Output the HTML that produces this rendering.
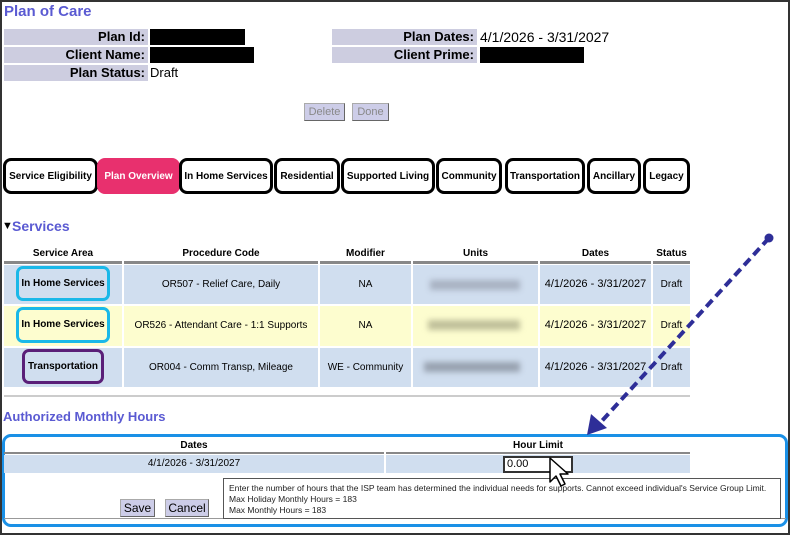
<!DOCTYPE html>
<html><head><style>
*{margin:0;padding:0;box-sizing:border-box}
body{width:790px;height:535px;position:relative;background:#fff;font-family:"Liberation Sans",Arial,sans-serif;overflow:hidden}
.a{position:absolute}
.frame{left:0;top:0;width:790px;height:535px;border:2px solid #333;border-right-width:2px}
.h{color:#5a5ad2;font-weight:bold}
.lab{background:#cdcde0;font-weight:bold;font-size:13px;text-align:right;padding-right:3px;line-height:16px;height:16px}
.blk{background:#000;height:16px}
.val{font-size:13px;line-height:16px}
.btn{background:#cdcde8;border:1px solid #aaa;border-right-color:#666;border-bottom-color:#666;font-size:11px;color:#888;text-align:center;line-height:16px}
.tab{border:3px solid #000;border-radius:8px;height:36px;top:158px;font-size:10px;font-weight:bold;text-align:center;line-height:32px;background:#fff}
.th{font-size:10px;font-weight:bold;text-align:center;top:248px;line-height:12px}
.td{font-size:10px;text-align:center}
.sa{border:3px solid #1ab8e8;border-radius:7px;font-size:10px;font-weight:bold;text-align:center}
</style></head><body>
<div class="a frame"></div>
<div class="a h" style="left:4px;top:3px;font-size:15px">Plan of Care</div>

<div class="a lab" style="left:4px;top:29px;width:144px">Plan Id:</div>
<div class="a blk" style="left:150px;top:29px;width:95px"></div>
<div class="a lab" style="left:4px;top:47px;width:144px">Client Name:</div>
<div class="a blk" style="left:150px;top:47px;width:104px"></div>
<div class="a lab" style="left:4px;top:65px;width:144px">Plan Status:</div>
<div class="a val" style="left:150px;top:65px">Draft</div>

<div class="a lab" style="left:332px;top:29px;width:145px">Plan Dates:</div>
<div class="a val" style="left:480px;top:29px;font-size:14px">4/1/2026 - 3/31/2027</div>
<div class="a lab" style="left:332px;top:47px;width:145px">Client Prime:</div>
<div class="a blk" style="left:480px;top:47px;width:104px"></div>

<div class="a btn" style="left:304px;top:103px;width:41px;height:18px">Delete</div>
<div class="a btn" style="left:352px;top:103px;width:37px;height:18px">Done</div>

<div class="a tab" style="left:3px;width:95px">Service Eligibility</div>
<div class="a tab" style="left:97px;width:83px;background:#e8306e;border-color:#e8306e;color:#fff">Plan Overview</div>
<div class="a tab" style="left:179px;width:94px">In Home Services</div>
<div class="a tab" style="left:274px;width:66px">Residential</div>
<div class="a tab" style="left:341px;width:94px">Supported Living</div>
<div class="a tab" style="left:436px;width:66px">Community</div>
<div class="a tab" style="left:505px;width:80px">Transportation</div>
<div class="a tab" style="left:587px;width:54px">Ancillary</div>
<div class="a tab" style="left:643px;width:47px">Legacy</div>

<div class="a" style="left:2px;top:220px;font-size:11px">&#9660;</div>
<div class="a h" style="left:12px;top:218px;font-size:14px">Services</div>

<div class="a th" style="left:4px;width:118px">Service Area</div>
<div class="a th" style="left:124px;width:194px">Procedure Code</div>
<div class="a th" style="left:320px;width:91px">Modifier</div>
<div class="a th" style="left:413px;width:125px">Units</div>
<div class="a th" style="left:540px;width:111px">Dates</div>
<div class="a th" style="left:653px;width:37px">Status</div>
<div class="a" style="left:4px;top:261px;width:686px;height:3px;background:linear-gradient(90deg,#888 0 118px,#fff 118px 120px,#888 120px 314px,#fff 314px 316px,#888 316px 407px,#fff 407px 409px,#888 409px 534px,#fff 534px 536px,#888 536px 647px,#fff 647px 649px,#888 649px)"></div>

<div class="a" style="left:4px;top:265px;width:686px;height:39px;background:#d0deef"></div>
<div class="a" style="left:4px;top:306px;width:686px;height:40px;background:#fdfdcf"></div>
<div class="a" style="left:4px;top:348px;width:686px;height:39px;background:#d0deef"></div>
<div class="a" style="left:122px;top:265px;width:2px;height:122px;background:#fff"></div>
<div class="a" style="left:318px;top:265px;width:2px;height:122px;background:#fff"></div>
<div class="a" style="left:411px;top:265px;width:2px;height:122px;background:#fff"></div>
<div class="a" style="left:538px;top:265px;width:2px;height:122px;background:#fff"></div>
<div class="a" style="left:651px;top:265px;width:2px;height:122px;background:#fff"></div>

<div class="a sa" style="left:16px;top:266px;width:94px;height:35px;line-height:29px">In Home Services</div>
<div class="a sa" style="left:16px;top:307px;width:94px;height:36px;line-height:30px">In Home Services</div>
<div class="a sa" style="left:22px;top:349px;width:82px;height:35px;line-height:29px;border-color:#5a1f78">Transportation</div>

<div class="a td" style="left:124px;top:279px;width:194px">OR507 - Relief Care, Daily</div>
<div class="a td" style="left:124px;top:320px;width:194px">OR526 - Attendant Care - 1:1 Supports</div>
<div class="a td" style="left:124px;top:362px;width:194px">OR004 - Comm Transp, Mileage</div>
<div class="a td" style="left:320px;top:279px;width:91px">NA</div>
<div class="a td" style="left:320px;top:320px;width:91px">NA</div>
<div class="a td" style="left:320px;top:362px;width:91px">WE - Community</div>
<div class="a" style="left:430px;top:280px;width:90px;height:10px;background:#a8b2c2;filter:blur(3px)"></div>
<div class="a" style="left:428px;top:320px;width:92px;height:10px;background:#c0c09a;filter:blur(3px)"></div>
<div class="a" style="left:424px;top:362px;width:96px;height:10px;background:#98a2b0;filter:blur(3px)"></div>
<div class="a td" style="left:540px;top:278px;width:111px;font-size:11px">4/1/2026 - 3/31/2027</div>
<div class="a td" style="left:540px;top:319px;width:111px;font-size:11px">4/1/2026 - 3/31/2027</div>
<div class="a td" style="left:540px;top:361px;width:111px;font-size:11px">4/1/2026 - 3/31/2027</div>
<div class="a td" style="left:653px;top:279px;width:37px">Draft</div>
<div class="a td" style="left:653px;top:320px;width:37px">Draft</div>
<div class="a td" style="left:653px;top:362px;width:37px">Draft</div>
<div class="a" style="left:4px;top:395px;width:686px;height:2px;background:#ccc"></div>

<div class="a h" style="left:3px;top:409px;font-size:13px">Authorized Monthly Hours</div>
<div class="a" style="left:2px;top:434px;width:786px;height:93px;border:3px solid #1a90e6;border-radius:9px"></div>
<div class="a th" style="left:4px;top:440px;width:380px">Dates</div>
<div class="a th" style="left:386px;top:440px;width:304px">Hour Limit</div>
<div class="a" style="left:4px;top:452px;width:380px;height:2px;background:#888"></div>
<div class="a" style="left:386px;top:452px;width:304px;height:2px;background:#888"></div>
<div class="a" style="left:4px;top:455px;width:686px;height:18px;background:#d0deef"></div>
<div class="a" style="left:384px;top:455px;width:2px;height:18px;background:#fff"></div>
<div class="a td" style="left:4px;top:458px;width:380px;font-size:10px">4/1/2026 - 3/31/2027</div>
<div class="a" style="left:503px;top:456px;width:70px;height:17px;border:2px solid #333;background:#fff;font-size:11px;padding-left:2px;line-height:13px">0.00</div>
<div class="a" style="left:4px;top:518px;width:782px;height:1px;background:#999"></div>
<div class="a btn" style="left:120px;top:499px;width:35px;height:18px;color:#000;font-size:12px">Save</div>
<div class="a btn" style="left:165px;top:499px;width:44px;height:18px;color:#000;font-size:12px">Cancel</div>
<div class="a" style="left:223px;top:478px;width:558px;height:41px;border:1px solid #555;background:#fff;font-size:8.5px;line-height:11px;padding:4px 0 0 5px;color:#222">Enter the number of hours that the ISP team has determined the individual needs for supports. Cannot exceed individual's Service Group Limit.<br>Max Holiday Monthly Hours = 183<br>Max Monthly Hours = 183</div>

<svg class="a" style="left:0;top:0" width="790" height="535">
<line x1="769" y1="238" x2="600" y2="423" stroke="#2e2e98" stroke-width="4" stroke-dasharray="9,5"/>
<circle cx="769" cy="238" r="4.5" fill="#2e2e98"/>
<path d="M587 435 L591 414 L607 428 Z" fill="#2e2e98"/>
<path d="M550 458 L550 482 L556 476 L561 486 L565 484 L560 474 L568 474 Z" fill="#fff" stroke="#000" stroke-width="1.5" stroke-linejoin="round"/>
</svg>
</body></html>
